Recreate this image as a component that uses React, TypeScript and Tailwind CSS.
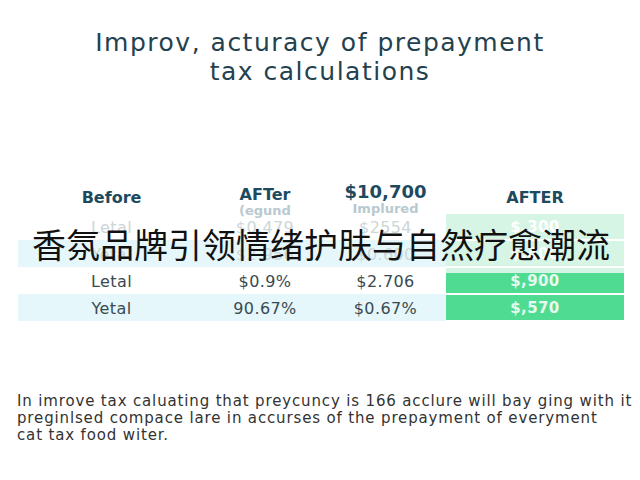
import React from "react";

const ROWS = [
  { label: "Letal", after: "$0.479", improved: "$2554", result: "$,300", tint: false, strong: false, faded: true, lip: false },
  { label: "Yetal", after: "$2.956", improved: "$0.600", result: "$,400", tint: true, strong: false, faded: true, lip: false },
  { label: "Letal", after: "$0.9%", improved: "$2.706", result: "$,900", tint: false, strong: true, faded: false, lip: true },
  { label: "Yetal", after: "90.67%", improved: "$0.67%", result: "$,570", tint: true, strong: true, faded: false, lip: false },
];

const COLS = "grid grid-cols-[187px_120px_121px_178px]";

function Header() {
  return (
    <div className={`${COLS} h-[30px] items-start text-[#1d4a5f]`}>
      <div className="pt-[3px] text-center text-[16px] font-bold">Before</div>
      <div className="text-center leading-[16px]">
        <div className="pt-[4px] text-[16px] font-bold">AFTer</div>
        <div className="text-[13px] font-bold text-[#b9c9d0]">(egund</div>
      </div>
      <div className="text-center leading-[17px]">
        <div className="text-[18px] font-bold">$10,700</div>
        <div className="text-[13px] font-bold text-[#b9c9d0]">Implured</div>
      </div>
      <div className="pt-[3px] text-center text-[16px] font-bold">AFTER</div>
    </div>
  );
}

export default function App() {
  return (
    <div className="relative h-[480px] w-[640px] overflow-hidden bg-white font-['DejaVu_Sans',sans-serif]">
      <h1 className="pt-[28px] text-center text-[25px] font-normal leading-[29px] tracking-[1.5px] text-[#24414f]">
        Improv, acturacy of prepayment
        <br />
        tax calculations
      </h1>

      <div className="ml-[18px] mt-[97px]">
        <Header />
        {ROWS.map((row, i) => (
          <div
            key={i}
            className={`${COLS} h-[27px] items-center text-[16px] tracking-[0.4px] ${
              row.faded ? "text-[#cdd6d9]" : "text-[#3a4a50]"
            }`}
          >
            <div className={`flex h-full items-center justify-center pt-[2px] ${row.tint ? "bg-[#e5f7fa]" : ""}`}>{row.label}</div>
            <div className={`flex h-full items-center justify-center pt-[2px] ${row.tint ? "bg-[#e5f7fa]" : ""}`}>{row.after}</div>
            <div className={`flex h-full items-center justify-center pt-[2px] ${row.tint ? "bg-[#e5f7fa]" : ""}`}>{row.improved}</div>
            <div
              className={`flex h-[25px] items-center justify-center pt-[1px] text-[15px] font-bold ${
                row.strong ? "text-[#e6fbef]" : "bg-[#d6f5e4] text-white"
              } ${row.strong && row.lip ? "bg-[linear-gradient(#d6f5e4_0_5px,#4fdb91_5px)]" : ""} ${
                row.strong && !row.lip ? "bg-[#4fdb91]" : ""
              }`}
            >
              {row.result}
            </div>
          </div>
        ))}
      </div>

      <p className="ml-[17px] mt-[72px] whitespace-nowrap text-[15px] leading-[17px] tracking-[0.85px] text-[#333]">
        In imrove tax caluating that preycuncy is 166 acclure will bay ging with it
        <br />
        preginlsed compace lare in accurses of the prepayment of everyment
        <br />
        cat tax food witer.
      </p>

      <div className="absolute left-[32px] top-[224px] whitespace-nowrap font-['Noto_Sans_CJK_SC',sans-serif] text-[34px] leading-[40px] text-[#111]">
        香氛品牌引领情绪护肤与自然疗愈潮流
      </div>
    </div>
  );
}
